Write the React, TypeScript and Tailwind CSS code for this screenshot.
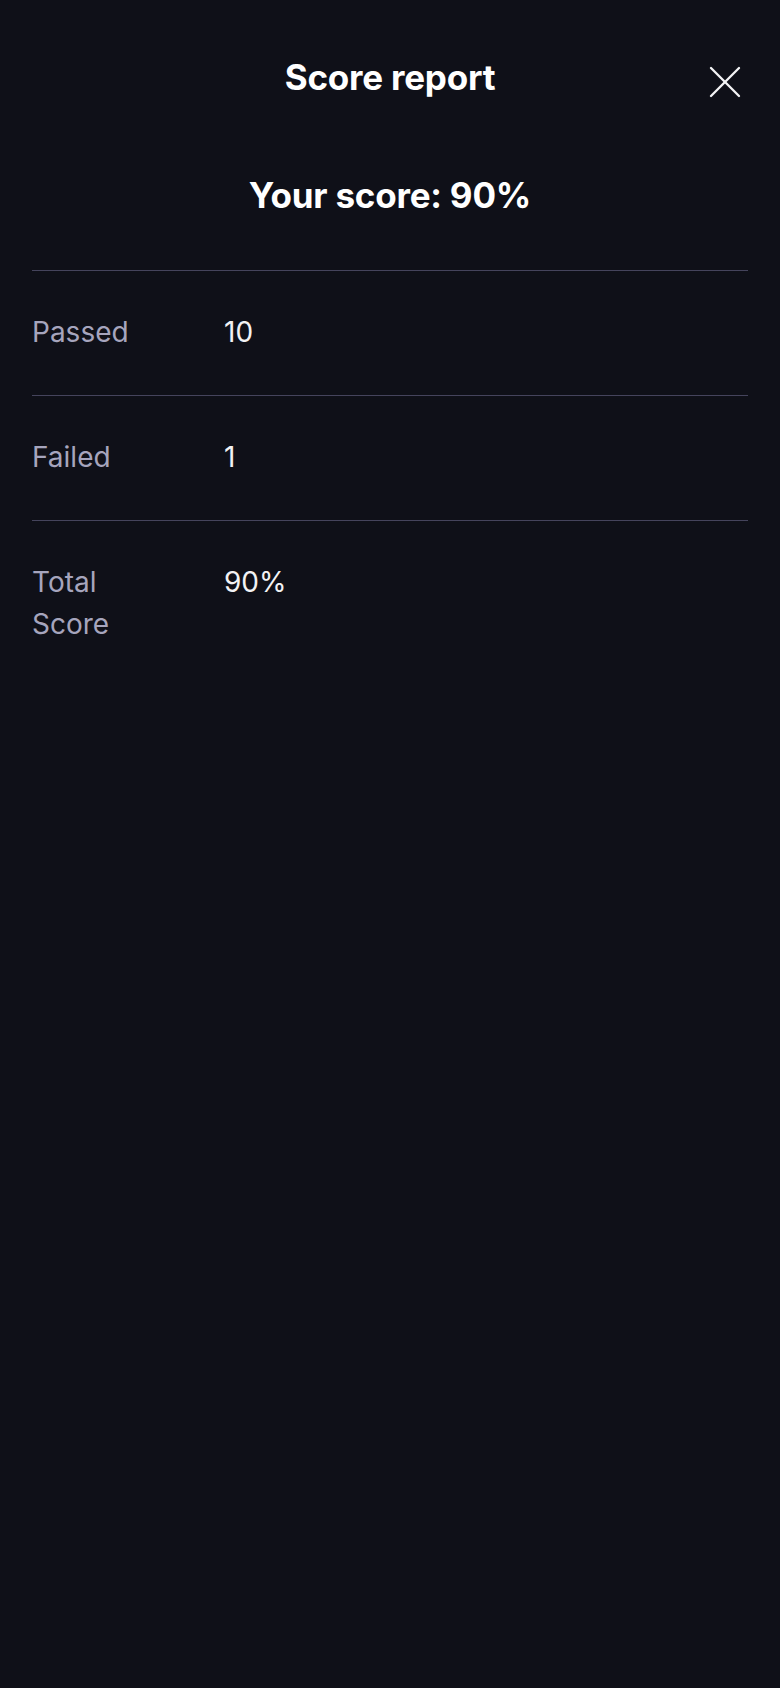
const rows = [
  { label: 'Passed', value: '10' },
  { label: 'Failed', value: '1' },
  { label: 'Total Score', value: '90%' },
];

function CloseIcon() {
  return (
    <svg width="32" height="32" viewBox="0 0 32 32" fill="none" stroke="currentColor" strokeWidth="2.3" strokeLinecap="round">
      <path d="M2 2 30 30" />
      <path d="M30 2 2 30" />
    </svg>
  );
}

export default function App() {
  return (
    <div
      className="min-h-[1688px] w-full bg-[#0f1018] text-white"
      style={{ fontFamily: 'Inter, "Noto Sans", sans-serif' }}
    >
      <header className="grid grid-cols-[1fr_auto_1fr] items-center px-8 pt-[53px]">
        <div />
        <h1 className="text-[35px] font-bold leading-[48px] tracking-[-0.2px]">Score report</h1>
        <div className="flex justify-end">
          <button className="mr-[7px] mt-[10px] text-[#f4f4f6]" aria-label="Close">
            <CloseIcon />
          </button>
        </div>
      </header>

      <h2 className="mt-[70px] text-center text-[35px] font-bold leading-[48px] tracking-[-0.2px]">
        Your score: 90%
      </h2>

      <div className="mx-8 mt-[51px]">
        {rows.map((row) => (
          <div key={row.label} className="flex border-t border-[#45445c] pt-[40px] pb-[42px] text-[28px] leading-[42px]">
            <div className="w-[120px] shrink-0 text-[#a6a5bd]">{row.label}</div>
            <div className="ml-[72px] text-[#f2f2f4]">{row.value}</div>
          </div>
        ))}
      </div>
    </div>
  );
}
